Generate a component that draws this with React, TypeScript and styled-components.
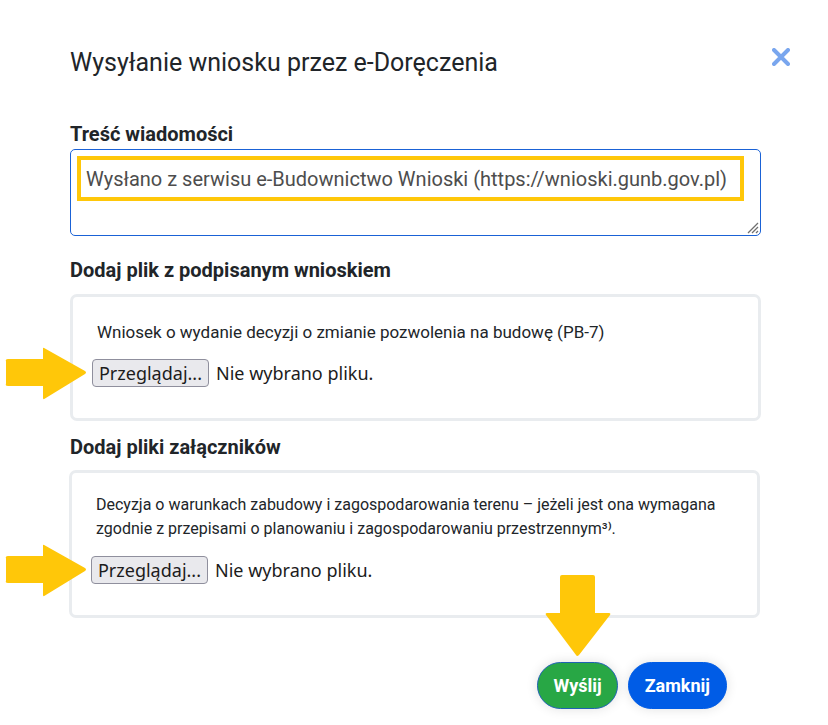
import React from "react";
import styled, { createGlobalStyle } from "styled-components";

const Global = createGlobalStyle`
  html, body { margin: 0; padding: 0; background: #ffffff; }
  body { font-family: Roboto, "Noto Sans", Arial, sans-serif; color: #212529; }
  * { box-sizing: border-box; }
`;

const Dialog = styled.div`
  position: relative;
  width: 828px;
  height: 725px;
  padding: 47px 0 0 70px;
  display: flex;
  flex-direction: column;
  overflow: hidden;
`;

const Header = styled.div`
  display: flex;
  align-items: center;
  justify-content: space-between;
  padding-right: 36px;
  height: 32px;
`;

const Title = styled.h1`
  margin: 0;
  font-size: 25px;
  font-weight: 400;
  line-height: 32px;
  color: #212529;
`;

const CloseButton = styled.button`
  border: 0;
  background: transparent;
  padding: 0;
  width: 22px;
  height: 22px;
  margin-top: -12px;
  display: flex;
  align-items: center;
  justify-content: center;
  cursor: pointer;
`;

const Body = styled.div`
  width: 691px;
  display: flex;
  flex-direction: column;
`;

const Label = styled.div<{ $top: number; $bottom: number }>`
  font-size: 20px;
  font-weight: 700;
  line-height: 30px;
  margin-top: ${(p) => p.$top}px;
  margin-bottom: ${(p) => p.$bottom}px;
  color: #212529;
`;

const MessageBox = styled.div`
  position: relative;
  height: 87px;
  border: 1px solid #1a62d6;
  border-radius: 5px;
  padding: 6px;
`;

const Highlight = styled.div`
  width: 667px;
  height: 45px;
  border: 4px solid #ffc709;
  padding: 0 0 0 5px;
  display: flex;
  align-items: center;
  font-size: 20px;
  color: #4d4d4d;
  white-space: nowrap;
`;

const Grip = styled.svg`
  position: absolute;
  right: 1px;
  bottom: 1px;
`;

const Card = styled.div<{ $padTop: number; $shift: number }>`
  border: 3px solid #e9ecef;
  border-radius: 7px;
  padding: ${(p) => p.$padTop}px 20px 31px 19px;
  margin-left: ${(p) => p.$shift}px;
  margin-right: ${(p) => -p.$shift}px;
  display: flex;
  flex-direction: column;
  gap: 15px;
`;

const Description = styled.div<{ $size: number }>`
  font-size: ${(p) => p.$size}px;
  line-height: 24px;
  padding-left: 5px;
  color: #212529;
`;

const FileRow = styled.div`
  display: flex;
  align-items: center;
  gap: 7px;
  height: 28px;
  font-family: "Noto Sans", "Open Sans", sans-serif;
  font-size: 18px;
  line-height: 24px;
  color: #1c1c1c;
`;

const BrowseButton = styled.span`
  display: inline-flex;
  align-items: center;
  justify-content: center;
  height: 28px;
  width: 117px;
  border: 1px solid #8f8f9d;
  border-radius: 4px;
  background: #e9e9ed;
  color: #1c1c1c;
  white-space: nowrap;
`;

const Footer = styled.div`
  display: flex;
  justify-content: flex-end;
  gap: 10px;
  width: 657px;
  margin-top: 44px;
`;

const ActionButton = styled.button<{ $variant: "send" | "close" }>`
  height: 47px;
  padding: 0 ${(p) => (p.$variant === "send" ? 15 : 16)}px;
  border-radius: 24px;
  border: 1px solid ${(p) => (p.$variant === "send" ? "#1f62b3" : "#005ce6")};
  background: ${(p) => (p.$variant === "send" ? "#28a745" : "#005ce6")};
  color: #ffffff;
  font-family: Roboto, sans-serif;
  font-size: 18px;
  font-weight: 700;
  box-shadow: 0 0 12px rgba(0, 0, 0, 0.12);
  cursor: pointer;
`;

const Arrow = styled.svg<{ $x: number; $y: number }>`
  position: absolute;
  left: ${(p) => p.$x}px;
  top: ${(p) => p.$y}px;
`;

const ArrowRight = ({ x, y }: { x: number; y: number }) => (
  <Arrow $x={x} $y={y} width="82" height="53" viewBox="0 0 82 53">
    <path
      d="M1 14.5 Q0 12 3 12 L38 12 L38 1.5 Q38 0 40 1.5 L80 24 Q82 25.5 80 27 L40 51.5 Q38 53 38 51 L38 39 L3 39 Q0 39 1 36.5 Z"
      fill="#ffc709"
    />
  </Arrow>
);

const ArrowDown = ({ x, y }: { x: number; y: number }) => (
  <Arrow $x={x} $y={y} width="66" height="82" viewBox="0 0 66 82">
    <path
      d="M15 2 Q15 0 17 0 L48 0 Q50 0 50 2 L50 38 L64 38 Q66 38 65 40 L34 80 Q32 82 31 80 L1 40 Q0 38 2 38 L15 38 Z"
      fill="#ffc709"
    />
  </Arrow>
);

export default function App() {
  return (
    <>
      <Global />
      <Dialog>
        <Header>
          <Title>Wysyłanie wniosku przez e-Doręczenia</Title>
          <CloseButton aria-label="Zamknij">
            <svg width="18" height="18" viewBox="0 0 18 18">
              <path d="M2 2 L16 16 M16 2 L2 16" stroke="#79a6ee" strokeWidth="4" strokeLinecap="round" />
            </svg>
          </CloseButton>
        </Header>
        <Body>
          <Label $top={40} $bottom={0}>Treść wiadomości</Label>
          <MessageBox>
            <Highlight>Wysłano z serwisu e-Budownictwo Wnioski (https://wnioski.gunb.gov.pl)</Highlight>
            <Grip width="14" height="14" viewBox="0 0 14 14">
              <path d="M3 13 L13 3 M7 13 L13 7 M11 13 L13 11" stroke="#6f6f6f" strokeWidth="1.3" />
            </Grip>
          </MessageBox>
          <Label $top={19} $bottom={9}>Dodaj plik z podpisanym wnioskiem</Label>
          <Card $padTop={23} $shift={0}>
            <Description $size={17}>Wniosek o wydanie decyzji o zmianie pozwolenia na budowę (PB-7)</Description>
            <FileRow>
              <BrowseButton>Przeglądaj...</BrowseButton>
              <span>Nie wybrano pliku.</span>
            </FileRow>
          </Card>
          <Label $top={11} $bottom={8}>Dodaj pliki załączników</Label>
          <Card $padTop={20} $shift={-1}>
            <Description $size={16}>
              Decyzja o warunkach zabudowy i zagospodarowania terenu – jeżeli jest ona wymagana zgodnie z przepisami o
              planowaniu i zagospodarowaniu przestrzennym³⁾.
            </Description>
            <FileRow>
              <BrowseButton>Przeglądaj...</BrowseButton>
              <span>Nie wybrano pliku.</span>
            </FileRow>
          </Card>
        </Body>
        <Footer>
          <ActionButton $variant="send">Wyślij</ActionButton>
          <ActionButton $variant="close">Zamknij</ActionButton>
        </Footer>
        <ArrowRight x={5} y={347} />
        <ArrowRight x={5} y={544} />
        <ArrowDown x={545} y={575} />
      </Dialog>
    </>
  );
}
